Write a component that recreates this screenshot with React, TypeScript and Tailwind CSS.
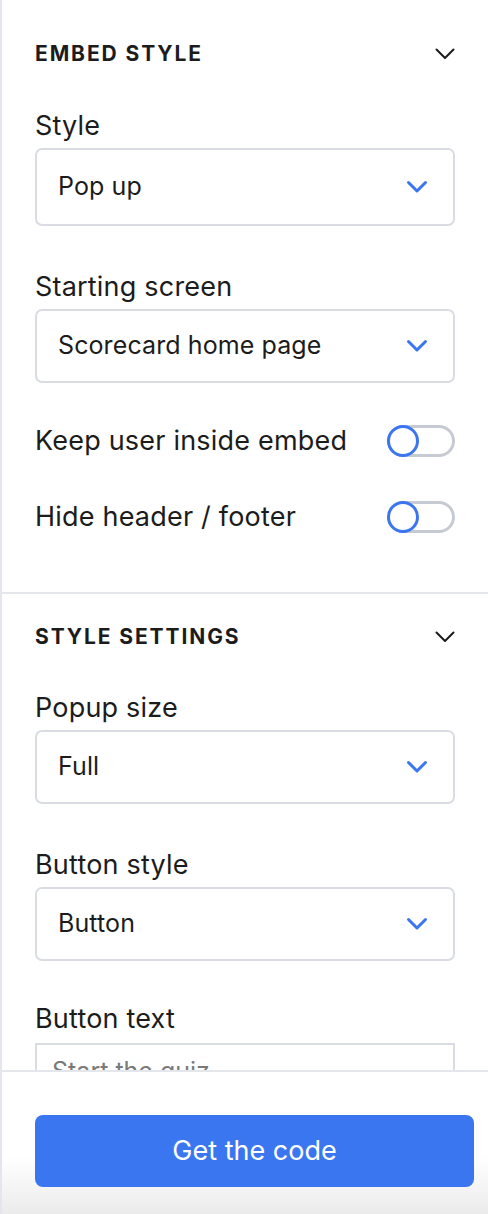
import React from 'react'

const font = { fontFamily: 'Inter, "Noto Sans", sans-serif' }

const HeaderChevron = () => (
  <svg width="20" height="12" viewBox="0 0 20 12" fill="none">
    <path d="M1.5 1.5 L10 10 L18.5 1.5" stroke="#1c1c1c" strokeWidth="2" strokeLinecap="round" strokeLinejoin="round" />
  </svg>
)

const SelectChevron = () => (
  <svg width="22" height="14" viewBox="0 0 22 14" fill="none">
    <path d="M2.5 2.5 L11 11 L19.5 2.5" stroke="#3b76f0" strokeWidth="3" strokeLinecap="round" strokeLinejoin="round" />
  </svg>
)

const SectionHeader = ({ title }: { title: string }) => (
  <div className="flex h-[28px] items-center justify-between">
    <span className="text-[21px] font-bold uppercase tracking-[1.9px] text-[#1c1c1c]">{title}</span>
    <HeaderChevron />
  </div>
)

const Label = ({ children }: { children: React.ReactNode }) => (
  <div className="text-[27px] leading-[32px] tracking-[0.2px] text-[#1c1c1c]">{children}</div>
)

const Select = ({ value, tall }: { value: string; tall?: boolean }) => (
  <div
    className={
      'flex items-center justify-between rounded-[7px] border-2 border-[#d9dde3] bg-white pl-[21px] pr-[25px] ' +
      (tall ? 'h-[78px]' : 'h-[74px]')
    }
  >
    <span className="text-[25px] tracking-[0.1px] text-[#1c1c1c]">{value}</span>
    <SelectChevron />
  </div>
)

const Toggle = () => (
  <div className="relative h-[32px] w-[68px]">
    <div className="h-full w-full rounded-full border-[3px] border-[#c6cbd3] bg-white" />
    <div className="absolute left-0 top-0 h-[32px] w-[32px] rounded-full border-[3px] border-[#3b76f0] bg-white" />
  </div>
)

const ToggleRow = ({ label }: { label: string }) => (
  <div className="flex h-[32px] items-center justify-between">
    <span className="text-[27px] tracking-[0.2px] text-[#1c1c1c]">{label}</span>
    <Toggle />
  </div>
)

export default function App() {
  return (
    <div className="flex h-[1214px] w-[488px] flex-col border-l-2 border-[#e3e6ea] bg-white" style={font}>
      <div className="flex-1 overflow-hidden">
        {/* embed style */}
        <div className="border-b-2 border-[#e3e6ea] px-[33px] pb-[59px] pt-[40px]">
          <SectionHeader title="Embed style" />
          <div className="mt-[42px] flex flex-col gap-[6px]">
            <Label>Style</Label>
            <Select value="Pop up" tall />
          </div>
          <div className="mt-[45px] flex flex-col gap-[6px]">
            <Label>Starting screen</Label>
            <Select value="Scorecard home page" />
          </div>
          <div className="mt-[42px]">
            <ToggleRow label="Keep user inside embed" />
          </div>
          <div className="mt-[44px]">
            <ToggleRow label="Hide header / footer" />
          </div>
        </div>

        {/* style settings */}
        <div className="px-[33px] pt-[29px]">
          <SectionHeader title="Style settings" />
          <div className="mt-[41px] flex flex-col gap-[6px]">
            <Label>Popup size</Label>
            <Select value="Full" />
          </div>
          <div className="mt-[45px] flex flex-col gap-[6px]">
            <Label>Button style</Label>
            <Select value="Button" />
          </div>
          <div className="mt-[42px] flex flex-col gap-[8px]">
            <Label>Button text</Label>
            <div className="h-[74px] border-2 border-[#d9dde3] px-[15px] pt-[8px]">
              <span className="text-[25px] text-[#7a7a7a]">Start the quiz</span>
            </div>
          </div>
        </div>
      </div>

      <div className="h-[144px] border-t-2 border-[#e3e6ea] bg-linear-to-b from-white from-60% to-[#ebebeb] pl-[33px] pr-[14px] pt-[43px]">
        <button className="flex h-[72px] w-full items-center justify-center rounded-[8px] bg-[#3b76f1] text-[27px] text-white">
          Get the code
        </button>
      </div>
    </div>
  )
}
